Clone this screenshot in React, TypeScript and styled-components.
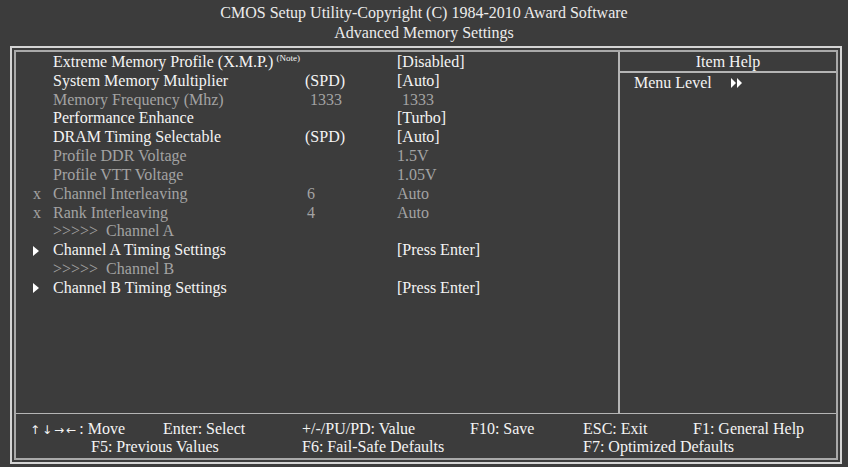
import styled, { createGlobalStyle } from "styled-components";

const GlobalStyle = createGlobalStyle`
  html, body {
    margin: 0;
    padding: 0;
    background: #3c3c3c;
  }
  body {
    font-family: "Liberation Serif", "Times New Roman", serif;
    font-size: 16px;
    color: #f4f4f4;
  }
`;

const Screen = styled.div`
  width: 848px;
  height: 467px;
  background: #3c3c3c;
  display: flex;
  flex-direction: column;
  overflow: hidden;
`;

const Header = styled.header`
  height: 46px;
  padding-top: 3px;
  box-sizing: border-box;
  text-align: center;
  line-height: 20px;
  color: #ececec;
`;

const OuterFrame = styled.div`
  margin-left: 10px;
  width: 832px;
  height: 418px;
  box-sizing: border-box;
  border: 2px solid #d4d4d4;
  padding: 2px;
`;

const InnerFrame = styled.div`
  height: 100%;
  box-sizing: border-box;
  border: 2px solid #a9a9a9;
  display: grid;
  grid-template-rows: 362px 1fr;
`;

const MainArea = styled.div`
  display: grid;
  grid-template-columns: 604px 1fr;
  border-bottom: 1px solid #b5b5b5;
`;

const ItemList = styled.div`
  border-right: 2px solid #b5b5b5;
  padding-top: 1px;
`;

const Row = styled.div<{ $dim?: boolean }>`
  display: grid;
  grid-template-columns: 20px 252px 92px 1fr;
  padding-left: 17px;
  height: 18.83px;
  line-height: 18.83px;
  white-space: nowrap;
  color: ${(p) => (p.$dim ? "#a3a3a3" : "#f4f4f4")};
`;

const Marker = styled.span`
  display: flex;
  align-items: center;
`;

const Cell = styled.span<{ $indent?: number }>`
  padding-left: ${(p) => p.$indent ?? 0}px;
`;

const Note = styled.sup`
  font-size: 9px;
  vertical-align: 6px;
  line-height: 0;
  margin-left: 3px;
`;

const HelpPanel = styled.div`
  display: flex;
  flex-direction: column;
`;

const HelpTitle = styled.div`
  height: 18px;
  padding-top: 1px;
  line-height: 18px;
  text-align: center;
  border-bottom: 2px solid #b5b5b5;
`;

const HelpLine = styled.div`
  display: flex;
  align-items: center;
  gap: 19px;
  padding-left: 14px;
  height: 19px;
  line-height: 19px;
`;

const Footer = styled.footer`
  display: grid;
  grid-template-columns: 133px 139px 168px 113px 110px 1fr;
  grid-auto-rows: 18px;
  align-content: start;
  padding: 6px 0 0 14px;
  line-height: 18px;
  white-space: nowrap;
`;

const Key = styled.span<{ $span?: number; $indent?: number }>`
  grid-column: span ${(p) => p.$span ?? 1};
  padding-left: ${(p) => p.$indent ?? 0}px;
`;

const Arrows = styled.span`
  font-family: "DejaVu Sans", sans-serif;
  font-size: 12px;
  letter-spacing: 2px;
  margin-right: 1px;
`;

function SubMenuArrow() {
  return (
    <svg width="6" height="10" viewBox="0 0 6 10">
      <polygon points="0,0 6,5 0,10" fill="#ffffff" />
    </svg>
  );
}

function LevelArrows() {
  return (
    <svg width="12" height="10" viewBox="0 0 12 10">
      <polygon points="0,0 5,5 0,10" fill="#ffffff" />
      <polygon points="6,0 11,5 6,10" fill="#ffffff" />
    </svg>
  );
}

interface Item {
  mark?: "x" | "sub";
  label: string;
  note?: boolean;
  mid?: string;
  midIndent?: number;
  value?: string;
  valueIndent?: number;
  dim?: boolean;
}

const items: Item[] = [
  { label: "Extreme Memory Profile (X.M.P.)", note: true, value: "[Disabled]" },
  { label: "System Memory Multiplier", mid: "(SPD)", value: "[Auto]" },
  { label: "Memory Frequency (Mhz)", mid: "1333", midIndent: 5, value: "1333", valueIndent: 5, dim: true },
  { label: "Performance Enhance", value: "[Turbo]" },
  { label: "DRAM Timing Selectable", mid: "(SPD)", value: "[Auto]" },
  { label: "Profile DDR Voltage", value: "1.5V", dim: true },
  { label: "Profile VTT Voltage", value: "1.05V", dim: true },
  { mark: "x", label: "Channel Interleaving", mid: "6", midIndent: 2, value: "Auto", dim: true },
  { mark: "x", label: "Rank Interleaving", mid: "4", midIndent: 2, value: "Auto", dim: true },
  { label: ">>>>>\u00a0\u00a0Channel A", dim: true },
  { mark: "sub", label: "Channel A Timing Settings", value: "[Press Enter]" },
  { label: ">>>>>\u00a0\u00a0Channel B", dim: true },
  { mark: "sub", label: "Channel B Timing Settings", value: "[Press Enter]" },
];

export default function App() {
  return (
    <Screen>
      <GlobalStyle />
      <Header>
        <div>CMOS Setup Utility-Copyright (C) 1984-2010 Award Software</div>
        <div>Advanced Memory Settings</div>
      </Header>
      <OuterFrame>
        <InnerFrame>
          <MainArea>
            <ItemList>
              {items.map((it) => (
                <Row key={it.label} $dim={it.dim}>
                  <Marker>
                    {it.mark === "x" && "x"}
                    {it.mark === "sub" && <SubMenuArrow />}
                  </Marker>
                  <Cell>
                    {it.label}
                    {it.note && <Note>(Note)</Note>}
                  </Cell>
                  <Cell $indent={it.midIndent}>{it.mid}</Cell>
                  <Cell $indent={it.valueIndent}>{it.value}</Cell>
                </Row>
              ))}
            </ItemList>
            <HelpPanel>
              <HelpTitle>Item Help</HelpTitle>
              <HelpLine>
                <span>Menu Level</span>
                <LevelArrows />
              </HelpLine>
            </HelpPanel>
          </MainArea>
          <Footer>
            <Key>
              <Arrows>↑↓→←</Arrows>: Move
            </Key>
            <Key>Enter: Select</Key>
            <Key>+/-/PU/PD: Value</Key>
            <Key>F10: Save</Key>
            <Key>ESC: Exit</Key>
            <Key>F1: General Help</Key>
            <Key $span={2} $indent={61}>F5: Previous Values</Key>
            <Key $span={2}>F6: Fail-Safe Defaults</Key>
            <Key $span={2}>F7: Optimized Defaults</Key>
          </Footer>
        </InnerFrame>
      </OuterFrame>
    </Screen>
  );
}
